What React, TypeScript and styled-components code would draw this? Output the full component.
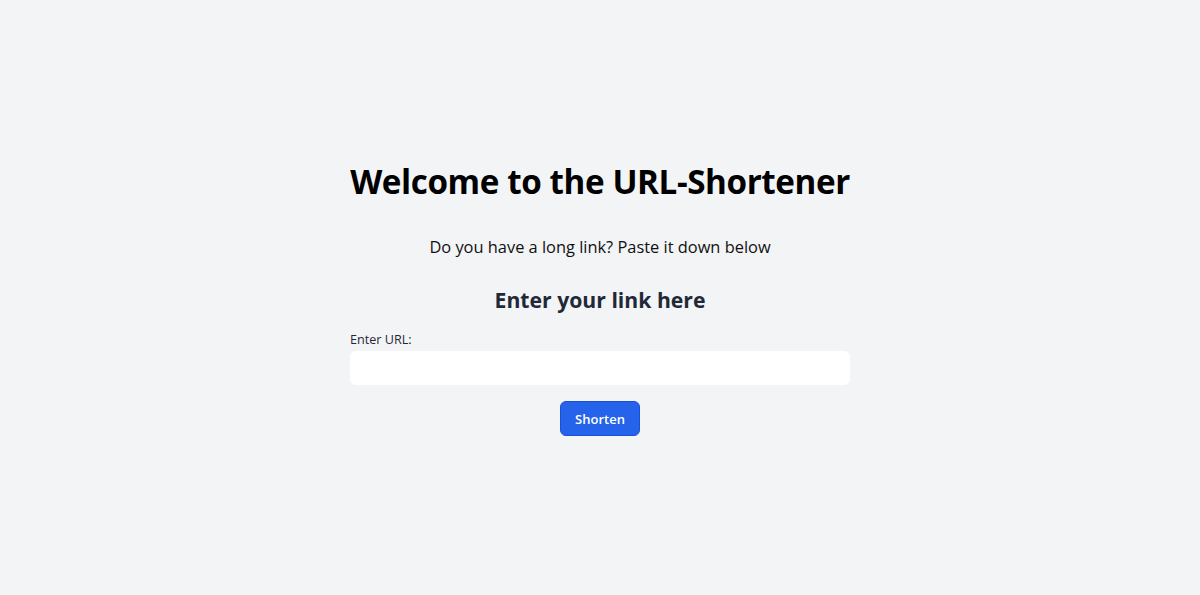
import * as React from 'react';
import styled, { createGlobalStyle } from 'styled-components';

const GlobalStyle = createGlobalStyle`
  html, body {
    margin: 0;
    padding: 0;
    background-color: #f3f4f6;
    font-family: "Open Sans", "Noto Sans", sans-serif;
  }
  * {
    box-sizing: border-box;
  }
`;

const Page = styled.main`
  min-height: 595px;
  display: flex;
  flex-direction: column;
  align-items: center;
  padding-top: 160px;
`;

const Title = styled.h1`
  margin: 0;
  font-size: 33.2px;
  line-height: 44px;
  font-weight: 700;
  color: #000;
  letter-spacing: -0.4px;
`;

const Subtitle = styled.p`
  margin: 29px 0 0;
  font-size: 16.4px;
  line-height: 28px;
  color: #111;
`;

const Form = styled.form`
  width: 500px;
  margin-top: 23px;
  display: flex;
  flex-direction: column;
`;

const FormTitle = styled.h2`
  margin: 0;
  text-align: center;
  font-size: 21.2px;
  line-height: 32px;
  font-weight: 700;
  color: #1f2937;
`;

const Label = styled.label`
  margin-top: 15px;
  font-size: 12.6px;
  line-height: 18px;
  font-weight: 500;
  color: #1f2937;
`;

const Input = styled.input`
  margin-top: 2px;
  height: 34px;
  width: 100%;
  border: none;
  border-radius: 6px;
  background: #fff;
  padding: 0 12px;
  font-size: 14px;
  font-family: inherit;
  outline: none;
`;

const Button = styled.button`
  align-self: center;
  margin-top: 16px;
  width: 80px;
  height: 35px;
  border: 1px solid #1d4ed8;
  border-radius: 6px;
  background-color: #2563eb;
  color: #fff;
  font-family: inherit;
  font-size: 13px;
  font-weight: 600;
  cursor: pointer;
`;

export default function App() {
  return (
    <>
      <GlobalStyle />
      <Page>
        <Title>Welcome to the URL-Shortener</Title>
        <Subtitle>Do you have a long link? Paste it down below</Subtitle>
        <Form onSubmit={(e) => e.preventDefault()}>
          <FormTitle>Enter your link here</FormTitle>
          <Label htmlFor="url">Enter URL:</Label>
          <Input id="url" type="text" />
          <Button type="submit">Shorten</Button>
        </Form>
      </Page>
    </>
  );
}
